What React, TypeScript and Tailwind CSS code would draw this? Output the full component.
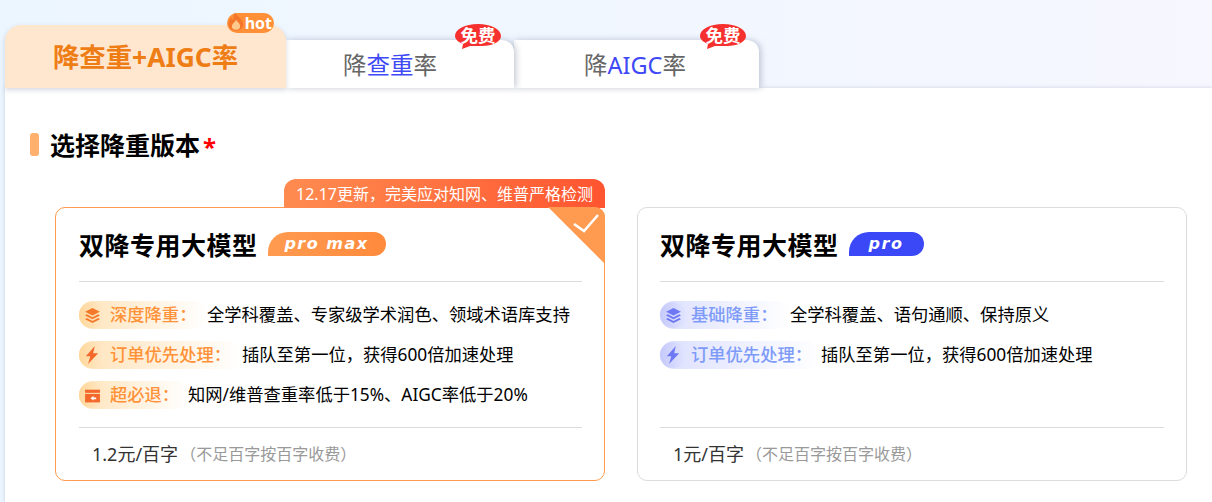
import type { ReactNode } from 'react'

const FONT = 'font-["Noto_Sans","Noto_Sans_CJK_SC",sans-serif]'

function FreeBadge() {
  return (
    <div className="absolute right-[13px] top-[-17px] h-[27px] w-[46px]">
      <svg viewBox="0 0 46 27" className="absolute inset-0 h-full w-full">
        <path d="M23 1C36 1 46 6 46 13c0 6-9 10-19 10-4 0-8 0-12 0l-8 3 1-5C3 19 0 16 0 13 0 6 10 1 23 1z" fill="#f5302e" />
      </svg>
      <span className="absolute left-0 top-[2px] w-full text-center text-[17.500px] leading-[20px] font-bold whitespace-nowrap text-white">免费</span>
    </div>
  )
}

function HotBadge() {
  return (
    <div className="absolute right-[12px] top-[-12px] flex h-[20px] w-[47px] items-center justify-end rounded-[10px] bg-[#ff9038] pr-[2px]">
      <svg viewBox="0 0 22 24" className="absolute left-0 top-[-3px] h-[23px] w-[18px]">
        <path d="M10 1c1 4 9 7 10 14 0 5-4 8-9 8s-9-3-9-8c0-4 2-6 4-8 0 2 1 3 2 3 0-3 0-6 2-9z" fill="#f4762a" />
        <path d="M11 10c1 2 5 4 5 8 0 3-2 4-5 4s-5-1-5-4c0-3 4-5 5-8z" fill="#fdc98c" />
      </svg>
      <span className="text-[16px] leading-[20px] font-bold text-white">hot</span>
    </div>
  )
}

function SideTab({ children, className }: { children: ReactNode; className: string }) {
  return (
    <div className={`relative flex h-[48px] items-center justify-center rounded-tr-[12px] bg-white pt-[2px] shadow-[2px_0_6px_rgba(90,100,130,0.35)] ${className}`}>
      <span className="text-[23.500px] leading-[32px] text-[#666]">{children}</span>
      <FreeBadge />
    </div>
  )
}

function Blue({ children }: { children: ReactNode }) {
  return <span className="text-[#3f49f5]">{children}</span>
}

function LayersIcon({ fill }: { fill: string }) {
  return (
    <svg viewBox="0 0 16 16" className="h-[17px] w-[17px]" fill={fill}>
      <path d="M8 1l7 3.5L8 8 1 4.5z" />
      <path d="M2.6 6.9L8 9.6l5.4-2.7L15 8l-7 3.500L1 8z" />
      <path d="M2.6 10.400L8 13.100l5.400-2.700L15 11.500 8 15l-7-3.500z" />
    </svg>
  )
}

function BoltIcon({ fill }: { fill: string }) {
  return (
    <svg viewBox="0 0 16 16" className="h-[18px] w-[18px]" fill={fill}>
      <path d="M10.500 0L2.500 9h4l-2 7 9-9.500H9z" />
    </svg>
  )
}

function RefundIcon({ fill }: { fill: string }) {
  return (
    <svg viewBox="0 0 16 16" className="h-[17px] w-[17px]">
      <path d="M1 2.500h14v3H1z" fill={fill} />
      <path d="M1 6.500h14v8H1z" fill={fill} />
      <path d="M9 8.500L6 10.700l3 2.100v-1.200h2.500v-1.800H9z" fill="#fff" />
    </svg>
  )
}

const ORANGE = {
  pill: 'from-[#ffe3b8] via-[#fff1dc] to-white',
  circle: 'from-[#ffd79a] to-[#ffeacb]',
  text: 'text-[#ff9238]',
}

const BLUE = {
  pill: 'from-[#dcdffd] via-[#eef0ff] to-white',
  circle: 'from-[#c5c9fb] to-[#e2e5ff]',
  text: 'text-[#7e9bf8]',
}

type Feature = { icon: ReactNode; label: string; text: string; width: string }

function FeatureRow({ feature, tone }: { feature: Feature; tone: typeof ORANGE }) {
  return (
    <div className="flex h-[40px] items-center">
      <div className={`flex h-[28px] shrink-0 items-center rounded-[14px] bg-gradient-to-r ${tone.pill} ${feature.width}`}>
        <div className={`flex h-[26px] w-[26px] shrink-0 items-center justify-center rounded-full bg-gradient-to-r ${tone.circle}`}>
          {feature.icon}
        </div>
        <span className={`ml-[5px] whitespace-nowrap text-[17.300px] leading-[24px] font-medium ${tone.text}`}>{feature.label}</span>
      </div>
      <span className="whitespace-nowrap text-[17.300px] leading-[24px] text-black">{feature.text}</span>
    </div>
  )
}

function PlanCard({
  tag,
  tagClass,
  tagWidth,
  tone,
  features,
  price,
  selected,
}: {
  tag: string
  tagClass: string
  tagWidth: string
  tone: typeof ORANGE
  features: Feature[]
  price: string
  selected?: boolean
}) {
  return (
    <div className={`relative flex h-[274px] w-[550px] flex-col rounded-[10px] border bg-white pr-[22px] ${selected ? 'border-[#ff9b50] pl-[23px]' : 'border-[#dcdcdc] pl-[22px]'}`}>
      {selected && (
        <>
          <div className="absolute right-[-1px] top-[-29px] flex h-[29px] w-[321px] items-center justify-center rounded-t-[12px] bg-gradient-to-r from-[#ff8b50] to-[#ff5430] text-[16px] whitespace-nowrap text-white">
            12.17更新，完美应对知网、维普严格检测
          </div>
          <svg viewBox="0 0 57 57" className="absolute right-[-1px] top-[-1px] h-[57px] w-[57px] rounded-tr-[10px]">
            <path d="M0 0H57V57z" fill="#ff9b50" />
            <path d="M26 17l10 7 14-16" fill="none" stroke="#fff" strokeWidth="2.500" />
          </svg>
        </>
      )}
      <div className="flex h-[74px] shrink-0 items-center border-b border-[#dcdcdc]">
        <span className="text-[25px] leading-[32px] font-bold tracking-[0.500px] text-black">双降专用大模型</span>
        <span className={`mb-[2px] ml-[10px] flex h-[24px] items-center justify-center rounded-[12px_12px_12px_0] rounded-tl-[20px] font-["DejaVu_Sans",sans-serif] text-[16px] font-bold italic tracking-[1.500px] text-white ${tagClass} ${tagWidth}`}>
          {tag}
        </span>
      </div>
      <div className="flex flex-1 flex-col pt-[13px]">
        {features.map((f) => (
          <FeatureRow key={f.label} feature={f} tone={tone} />
        ))}
      </div>
      <div className="flex h-[53px] shrink-0 items-center border-t border-[#dcdcdc] pl-[13px]">
        <span className="text-[18px] leading-[24px] text-[#333]">{price}</span>
        <span className="ml-[2px] text-[16px] leading-[24px] text-[#999]">（不足百字按百字收费）</span>
      </div>
    </div>
  )
}

export default function App() {
  return (
    <div className={`h-[502px] w-[1212px] overflow-hidden bg-gradient-to-r from-[#ecf6ff] to-[#f6f7ff] ${FONT}`}>
      <div className="relative z-10 flex h-[88px] items-end pl-[5px]">
        <div className="relative z-30 flex h-[63px] w-[281px] items-center justify-center rounded-t-[16px] bg-[#ffe7cf] shadow-[0_2px_5px_rgba(90,100,130,0.25)]">
          <span className="text-[26.400px] leading-[32px] font-bold text-[#ef7d16]">降查重+AIGC率</span>
          <HotBadge />
        </div>
        <SideTab className="z-20 w-[228px] pr-[20px]">
          降<Blue>查重</Blue>率
        </SideTab>
        <SideTab className="z-10 w-[245px] pr-[3px]">
          降<Blue>AIGC</Blue>率
        </SideTab>
      </div>
      <div className="ml-[5px] h-[414px] bg-white shadow-[0_0_4px_rgba(90,100,130,0.25)]">
        <div className="flex h-[118px] items-start pl-[25px] pt-[45px]">
          <div className="h-[23px] w-[9px] rounded-[3px] bg-[#ffb06c]" />
          <span className="ml-[11px] text-[25px] leading-[24px] font-bold text-black">选择降重版本</span>
          <span className="ml-[3px] text-[24px] leading-[28px] font-bold text-[#f00]">*</span>
        </div>
        <div className="flex gap-[32px] pl-[50px] pt-[1px]">
          <PlanCard
            selected
            tag="pro max"
            tagClass="bg-gradient-to-r from-[#ff9b50] to-[#ff8a3c]"
            tagWidth="w-[118px]"
            tone={ORANGE}
            price="1.2元/百字"
            features={[
              { icon: <LayersIcon fill="#f4792b" />, label: '深度降重：', text: '全学科覆盖、专家级学术润色、领域术语库支持', width: 'w-[128px]' },
              { icon: <BoltIcon fill="#f4692b" />, label: '订单优先处理：', text: '插队至第一位，获得600倍加速处理', width: 'w-[163px]' },
              { icon: <RefundIcon fill="#f4692b" />, label: '超必退：', text: '知网/维普查重率低于15%、AIGC率低于20%', width: 'w-[109px]' },
            ]}
          />
          <PlanCard
            tag="pro"
            tagClass="bg-[#3a48f8]"
            tagWidth="w-[75px]"
            tone={BLUE}
            price="1元/百字"
            features={[
              { icon: <LayersIcon fill="#6d78f2" />, label: '基础降重：', text: '全学科覆盖、语句通顺、保持原义', width: 'w-[130px]' },
              { icon: <BoltIcon fill="#6d78f2" />, label: '订单优先处理：', text: '插队至第一位，获得600倍加速处理', width: 'w-[161px]' },
            ]}
          />
        </div>
      </div>
    </div>
  )
}
